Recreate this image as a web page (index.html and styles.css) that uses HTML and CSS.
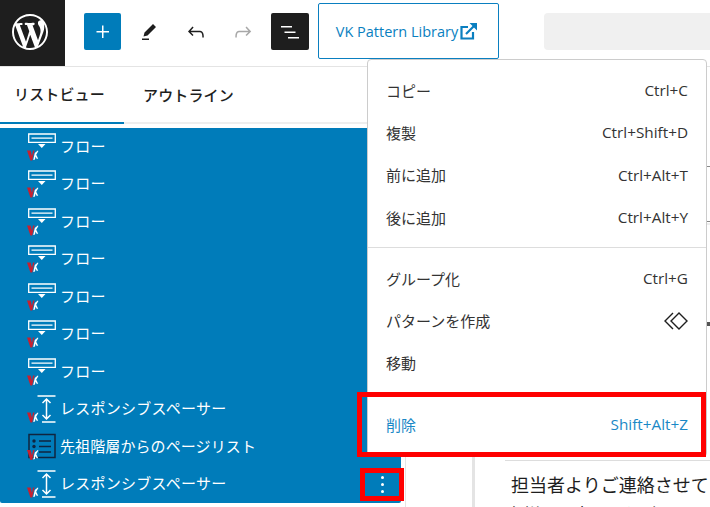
FILE: index.html
```html
<!DOCTYPE html>
<html lang="ja">
<head>
<meta charset="utf-8">
<title>Editor</title>
<link rel="stylesheet" href="styles.css">
</head>
<body>
<svg class="defs" width="0" height="0">
  <symbol id="vk" viewBox="0 0 12 11" overflow="visible">
    <path d="M0 1h3.500l1.500 5.500L6 1h1.500L5.200 11H3.400z" fill="#c8202f"/>
    <path d="M7.800 3.500 10.800 1l.6.6-2.200 3.700 2 4H9.600L8.500 7 8 10l-1.800.6z" fill="#fff"/>
  </symbol>
  <symbol id="flow" viewBox="0 0 28 28" overflow="visible">
    <path fill="none" stroke="#fff" stroke-width="1.300" d="M.7 1h26.600v8.400H.7z"/>
    <path fill="#fff" d="M3.500 4.400h21v1.300h-21zM10 11h7.500l-3.700 4z"/>
    <use href="#vk" x="-1" y="16.500" width="12" height="11"/>
  </symbol>
  <symbol id="spacer" viewBox="0 0 28 28" overflow="visible">
    <path fill="none" stroke="#fff" stroke-width="1.500" d="M9.500 1h18M14 27h13.500M18.500 4v20M14.500 8l4-4 4 4M14.500 20l4 4 4-4"/>
    <use href="#vk" x="-1" y="16.500" width="12" height="11"/>
  </symbol>
  <symbol id="pagelist" viewBox="0 0 28 28" overflow="visible">
    <path fill="none" stroke="#10243f" stroke-width="1.500" d="M1 1.500h26v23H1zM11 8h12M11 13.500h12M11 19h12"/>
    <circle cx="6" cy="8" r="1.700" fill="#10243f"/><circle cx="6" cy="13.500" r="1.700" fill="#10243f"/>
    <use href="#vk" x="-1" y="16" width="12" height="11"/>
  </symbol>
</svg>

<header class="topbar">
  <a class="wp"><svg viewBox="0 0 20 20" width="36" height="36"><path fill="#fff" d="M20 10c0-5.510-4.490-10-10-10C4.480 0 0 4.490 0 10c0 5.520 4.480 10 10 10 5.510 0 10-4.480 10-10zM7.780 15.370L4.370 6.220c.550-.020 1.170-.080 1.170-.080.500-.060.440-1.130-.060-1.110 0 0-1.450.110-2.370.110-.180 0-.370 0-.580-.010C4.120 2.690 6.870 1.110 10 1.110c2.330 0 4.450.870 6.050 2.340-.680-.110-1.650.390-1.650 1.580 0 .740.450 1.360.900 2.100.350.610.550 1.360.550 2.460 0 1.490-1.400 5-1.400 5l-3.030-8.370c.540-.020.820-.170.820-.170.500-.050.440-1.250-.060-1.220 0 0-1.440.120-2.380.120-.870 0-2.330-.120-2.330-.120-.500-.030-.560 1.200-.060 1.220l.920.080 1.260 3.410zM17.410 10c.240-.640.740-1.870.430-4.250.700 1.290 1.050 2.710 1.050 4.250 0 3.290-1.730 6.240-4.400 7.780.970-2.590 1.940-5.200 2.920-7.780zM6.100 18.090C3.120 16.650 1.110 13.530 1.110 10c0-1.300.230-2.480.720-3.590C3.250 10.300 4.670 14.200 6.100 18.090zm4.030-6.630l2.580 6.980c-.860.290-1.760.450-2.710.450-.790 0-1.570-.110-2.290-.330.810-2.380 1.620-4.740 2.420-7.100z"/></svg></a>
  <div class="tools">
    <button class="tool add"><svg viewBox="0 0 24 24" width="24" height="24"><path fill="#fff" d="M11 12.500V18h1.500v-5.500H18V11h-5.500V5.500H11V11H5.500v1.500z"/></svg></button>
    <button class="tool"><svg viewBox="0 0 24 24" width="24" height="24"><path fill="#1e1e1e" d="m19 7-3-3-8.500 8.500-1 4 4-1L19 7Zm-7 11.500H5V20h7v-1.500Z"/></svg></button>
    <button class="tool"><svg viewBox="0 0 24 24" width="24" height="24"><path fill="#1e1e1e" d="M18.300 11.700c-.6-.6-1.400-.9-2.300-.9H6.700l2.900-3.300-1.100-1-4.500 5L8.500 16l1-1-2.700-2.700H16c.5 0 .9.2 1.300.5 1 1 1 3.400 1 4.500v.3h1.500v-.2c0-1.500 0-4.300-1.500-5.700z"/></svg></button>
    <button class="tool"><svg viewBox="0 0 24 24" width="24" height="24"><path fill="#a8a8a8" d="M15.600 6.500l-1.100 1 2.900 3.300H8c-.9 0-1.700.3-2.300.9-1.400 1.500-1.400 4.200-1.400 5.600v.2h1.500v-.3c0-1.100 0-3.500 1-4.500.3-.3.7-.5 1.300-.5h9.200L14.500 15l1.100 1.100 4.600-4.600-4.600-5z"/></svg></button>
    <button class="tool dark"><svg viewBox="0 0 24 24" width="24" height="24"><path fill="#fff" d="M3 6h11v1.500H3V6Zm3.500 5.500h11V13h-11v-1.500ZM21 17H10v1.500h11V17Z"/></svg></button>
  </div>
  <a class="vk-btn">VK Pattern Library<svg viewBox="0 0 17 17" width="17" height="17"><path fill="none" stroke="#0a7fc0" stroke-width="2.200" d="M8 4H1.500v11.500H13V9"/><path fill="none" stroke="#0a7fc0" stroke-width="2.200" d="M6 11 15 2"/><path fill="#0a7fc0" d="M9.500 0H17v7.500z"/></svg></a>
  <div class="search"></div>
</header>

<main class="main">
  <aside class="sidebar">
    <nav class="tabs">
      <span class="tab active">リストビュー</span>
      <span class="tab">アウトライン</span>
    </nav>
    <ul class="list">
      <li class="row"><svg class="ico"><use href="#flow"/></svg><span class="label">フロー</span></li>
      <li class="row"><svg class="ico"><use href="#flow"/></svg><span class="label">フロー</span></li>
      <li class="row"><svg class="ico"><use href="#flow"/></svg><span class="label">フロー</span></li>
      <li class="row"><svg class="ico"><use href="#flow"/></svg><span class="label">フロー</span></li>
      <li class="row"><svg class="ico"><use href="#flow"/></svg><span class="label">フロー</span></li>
      <li class="row"><svg class="ico"><use href="#flow"/></svg><span class="label">フロー</span></li>
      <li class="row"><svg class="ico"><use href="#flow"/></svg><span class="label">フロー</span></li>
      <li class="row"><svg class="ico"><use href="#spacer"/></svg><span class="label">レスポンシブスペーサー</span></li>
      <li class="row"><svg class="ico"><use href="#pagelist"/></svg><span class="label tight">先祖階層からのページリスト</span></li>
      <li class="row"><svg class="ico"><use href="#spacer"/></svg><span class="label">レスポンシブスペーサー</span><span class="dots"><i></i><i></i><i></i></span></li>
    </ul>
  </aside>
  <section class="gutter"></section>
  <section class="canvas">
    <p class="para">担当者よりご連絡させて</p>
    <p class="para second">事様、要望などお伺い</p>
  </section>
</main>

<div class="menu">
  <div class="group">
    <div class="item"><span class="name">コピー</span><span class="key">Ctrl+C</span></div>
    <div class="item"><span class="name">複製</span><span class="key">Ctrl+Shift+D</span></div>
    <div class="item"><span class="name">前に追加</span><span class="key">Ctrl+Alt+T</span></div>
    <div class="item"><span class="name">後に追加</span><span class="key">Ctrl+Alt+Y</span></div>
  </div>
  <div class="group">
    <div class="item"><span class="name">グループ化</span><span class="key">Ctrl+G</span></div>
    <div class="item"><span class="name">パターンを作成</span><svg viewBox="0 0 24 24" width="24" height="24"><path fill="none" stroke="#1e1e1e" stroke-width="1.400" d="M15 4l8 8-8 8-8-8zM9 4l-8 8 8 8"/></svg></div>
    <div class="item"><span class="name">移動</span></div>
  </div>
  <div class="group">
    <div class="item del"><span class="name">削除</span><span class="key">Shift+Alt+Z</span></div>
  </div>
</div>
<div class="mark mark-del"></div>
<div class="mark mark-dots"></div>
</body>
</html>
```

FILE: styles.css
```css
* { box-sizing: border-box; }
html, body { margin: 0; height: 100%; }
body {
  width: 710px; height: 507px; overflow: hidden; position: relative; background: #fff;
  font-family: "Open Sans", "Noto Sans CJK JP", sans-serif; font-size: 15px; color: #1e1e1e;
}
.defs { position: absolute; }
.topbar { height: 67px; display: flex; align-items: flex-start; border-bottom: 1px solid #e4e4e4; }
.wp { width: 65px; height: 66px; background: #1e1e1e; display: flex; align-items: center; justify-content: center; flex: none; }
.wp svg { margin: 0 5px 3px 0; }
.tools { display: flex; align-items: center; gap: 9.750px; margin: 13px 0 0 19px; }
.tool { width: 37px; height: 37px; padding: 0; border: 0; background: none; border-radius: 2px; display: flex; align-items: center; justify-content: center; }
.add { background: #007cba; }
.dark { background: #1e1e1e; width: 38px; }
.vk-btn { margin: 3px 0 0 9px; width: 181px; height: 56px; border: 1px solid #0a7fc0; border-radius: 2px; color: #0a7fc0; font-size: 14.500px; display: flex; align-items: center; justify-content: center; gap: 2px; background: #fff; padding: 0 4px 0 0; }
.search { margin: 13px 0 0 45px; flex: 1; height: 37px; background: #f0f0f0; border-radius: 4px 0 0 4px; }
.main { display: flex; height: 440px; }
.sidebar { width: 406px; flex: none; border-right: 1px solid #e4e4e4; padding-right: 4px; }
.tabs { display: flex; height: 57px; border-bottom: 2px solid #eee; margin-right: -5px; }
.tab { width: 124px; display: flex; align-items: center; font-size: 15px; margin-bottom: -2px; color: #1e1e1e; font-weight: 500; padding: 0 0 3px 14px; letter-spacing: .01em; }
.tab + .tab { width: 115px; padding-left: 19px; }
.active { border-bottom: 2px solid #007cba; }
.list { list-style: none; margin: 4px 0 0; padding: 0; width: 401px; height: 375px; background: #007cba; border-radius: 0 0 2px 2px; color: #fff; }
.row { height: 37.500px; display: flex; align-items: center; padding-left: 28px; position: relative; }
.ico { width: 28px; height: 28px; margin-right: 4px; flex: none; overflow: visible; }
.label { margin: 0 0 3px; font-size: 15px; letter-spacing: .25px; }
.tight { letter-spacing: .1px; }
.dots { position: absolute; right: 0; top: 0; width: 37px; height: 37.500px; display: flex; flex-direction: column; align-items: center; justify-content: center; gap: 4px; }
.dots i { width: 3px; height: 3px; border-radius: 50%; background: #fff; }
.gutter { width: 69px; flex: none; border-right: 3px solid #e4e4e4; }
.canvas {
  flex: 1; padding: 393px 0 0 30px; overflow: hidden; white-space: nowrap;
  background-image: linear-gradient(#888, #888), linear-gradient(#888, #888), linear-gradient(#eee, #eee), linear-gradient(#555, #555);
  background-size: 3px 1px, 3px 1px, 3px 2px, 3px 4px;
  background-position: right 0 top 99px, right 0 top 154px, right 0 top 156px, right 0 top 255px;
  background-repeat: no-repeat;
}
.para { margin: 0; font-size: 18px; line-height: 30px; font-family: "Noto Sans CJK JP", sans-serif; border-top: 1px solid #ddd; padding: 8px 0 0 6px; }
.para.second { border: 0; padding: 0; }
.menu { position: absolute; left: 367px; top: 59px; width: 340px; height: 398px; background: #fff; border: 1px solid #ccc; border-radius: 4px; }
.group { padding: 9px 0; border-bottom: 1px solid #ddd; }
.group:last-child { border: 0; }
.item { height: 42.300px; display: flex; align-items: center; justify-content: space-between; padding: 0 18px 0 18px; color: #333; }
.name { font-size: 15px; }
.key { font-size: 15.300px; }
.del { color: #1a88c6; }
.mark { position: absolute; border: 5px solid #f00; }
.mark-del { left: 357px; top: 392px; width: 349px; height: 65px; }
.mark-dots { left: 360px; top: 468px; width: 44px; height: 33px; }
```
